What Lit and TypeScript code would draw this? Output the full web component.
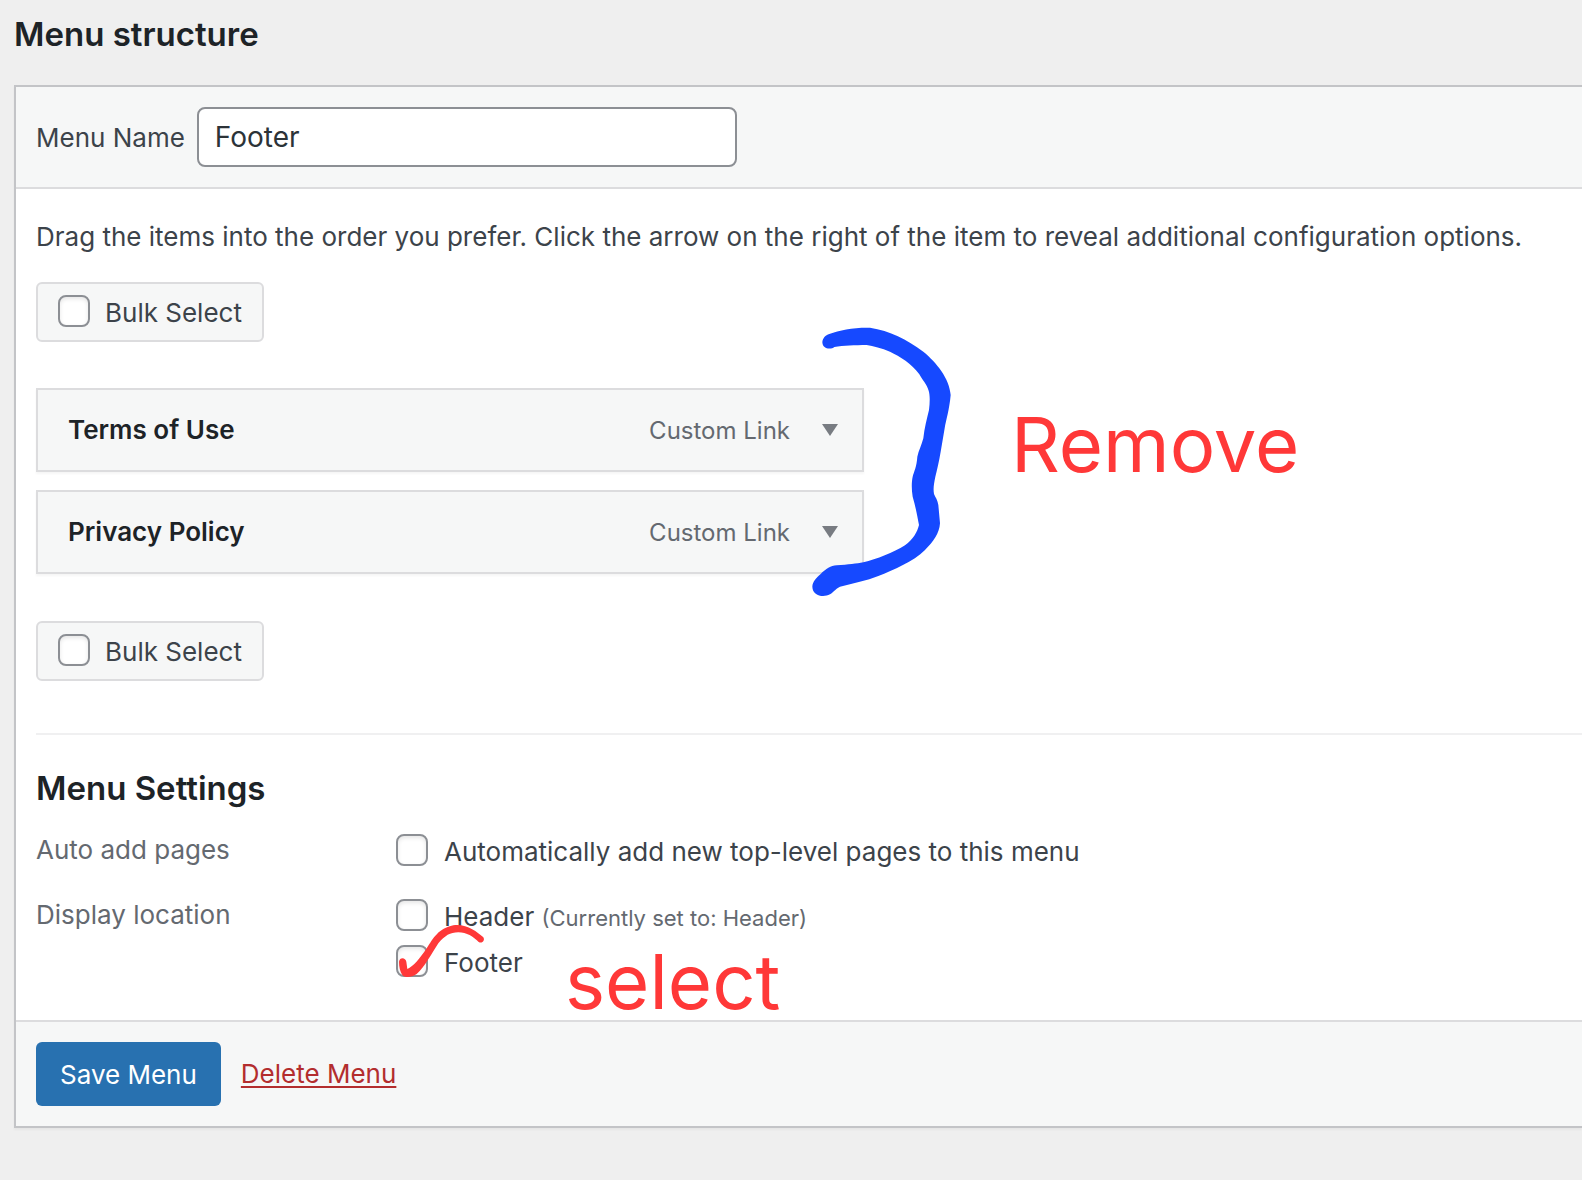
import { LitElement, html, css } from "lit";
import { customElement, property, state } from "lit/decorators.js";

interface MenuItem {
  title: string;
  type: string;
}

@customElement("bulk-select")
class BulkSelect extends LitElement {
  static styles = css`
    :host {
      display: block;
    }
    .bulk {
      display: inline-flex;
      align-items: center;
      gap: 15px;
      box-sizing: border-box;
      height: 60px;
      padding: 2px 20px 0;
      border: 2px solid #dcdcde;
      border-radius: 6px;
      background: #f6f7f7;
      color: #3c434a;
      font-size: 26px;
      line-height: 40px;
    }
    .box {
      appearance: none;
      flex: none;
      box-sizing: border-box;
      width: 32px;
      height: 32px;
      margin: 0 0 4px;
      border: 2px solid #8c8f94;
      border-radius: 8px;
      background: #fff;
      box-shadow: inset 0 2px 4px rgba(0, 0, 0, 0.1);
    }
  `;

  render() {
    return html`<label class="bulk"><input class="box" type="checkbox" />Bulk Select</label>`;
  }
}

@customElement("menu-item")
class MenuItemRow extends LitElement {
  @property() title = "";
  @property() type = "";

  static styles = css`
    :host {
      display: block;
    }
    .item {
      display: flex;
      align-items: center;
      box-sizing: border-box;
      height: 84px;
      padding: 0 12px 0 30px;
      border: 2px solid #dcdcde;
      background: #f6f7f7;
      box-shadow: 0 2px 2px rgba(0, 0, 0, 0.04);
      line-height: 40px;
    }
    .title {
      flex: 1;
      color: #1d2327;
      font-size: 26px;
      font-weight: 600;
    }
    .type {
      padding-top: 2px;
      color: #646970;
      font-size: 24px;
    }
    .toggle {
      display: flex;
      align-items: center;
      justify-content: center;
      width: 40px;
      height: 40px;
      margin-left: 20px;
      padding: 0;
      border: 0;
      background: none;
    }
    .arrow {
      display: block;
      width: 16px;
      height: 12px;
      fill: #787c82;
    }
  `;

  render() {
    return html`
      <div class="item">
        <span class="title">${this.title}</span>
        <span class="type">${this.type}</span>
        <button class="toggle" type="button" aria-label="Edit menu item">
          <svg class="arrow" viewBox="0 0 16 12"><path d="M0 0H16L8 12Z" /></svg>
        </button>
      </div>
    `;
  }
}

@customElement("app-root")
class AppRoot extends LitElement {
  @state() private items: MenuItem[] = [
    { title: "Terms of Use", type: "Custom Link" },
    { title: "Privacy Policy", type: "Custom Link" },
  ];

  static styles = css`
    :host {
      display: block;
      box-sizing: border-box;
      min-height: 100vh;
      padding: 14px 0 52px 14px;
      overflow: hidden;
      background: #efefef;
      color: #3c434a;
      font-family: Inter, "Liberation Sans", sans-serif;
      font-size: 26px;
      line-height: 40px;
    }
    .heading {
      margin: 0;
      color: #1d2327;
      font-size: 33px;
      font-weight: 600;
      line-height: 40px;
    }
    .panel {
      margin-top: 31px;
      border: 2px solid #c3c4c7;
      border-right: 0;
      background: #fff;
      box-shadow: 0 2px 2px rgba(0, 0, 0, 0.04);
    }
    .bar {
      display: flex;
      align-items: center;
      padding: 20px;
      background: #f6f7f7;
    }
    .top {
      gap: 12px;
      border-bottom: 2px solid #dcdcde;
    }
    .name-label {
      padding-top: 2px;
    }
    .name {
      box-sizing: border-box;
      width: 540px;
      height: 60px;
      padding: 0 16px;
      border: 2px solid #8c8f94;
      border-radius: 8px;
      background: #fff;
      color: #2c3338;
      font-family: inherit;
      font-size: 28px;
    }
    .content {
      padding: 28px 0 34px 20px;
    }
    .intro {
      margin: 0 0 25px;
      white-space: nowrap;
    }
    .items {
      position: relative;
      display: flex;
      flex-direction: column;
      gap: 18px;
      max-width: 828px;
      margin: 46px 0 47px;
    }
    .settings {
      position: relative;
      margin-top: 52px;
      padding-top: 33px;
      border-top: 2px solid #f0f0f1;
    }
    .group {
      display: grid;
      grid-template-columns: 360px 1fr;
      margin: 0;
      padding: 0;
      border: 0;
    }
    .fields {
      display: grid;
      gap: 17px;
      margin-top: 19px;
    }
    .legend {
      padding-top: 3px;
      color: #646970;
    }
    .options {
      display: grid;
      gap: 0;
      padding-top: 2px;
    }
    .option {
      display: flex;
      align-items: center;
      gap: 16px;
      height: 46px;
    }
    .box {
      appearance: none;
      flex: none;
      box-sizing: border-box;
      width: 32px;
      height: 32px;
      margin: 0 0 4px;
      border: 2px solid #8c8f94;
      border-radius: 8px;
      background: #fff;
      box-shadow: inset 0 2px 4px rgba(0, 0, 0, 0.1);
    }
    .note {
      color: #646970;
      font-size: 22px;
    }
    .bottom {
      gap: 20px;
      border-top: 2px solid #dcdcde;
    }
    .save {
      height: 64px;
      padding: 0 24px;
      border: 0;
      border-radius: 6px;
      background: #2871b0;
      color: #fff;
      font-family: inherit;
      font-size: 26px;
    }
    .delete {
      color: #b32d2e;
      text-decoration: underline;
      text-decoration-thickness: 2px;
      text-underline-offset: 3px;
    }
    .mark {
      position: absolute;
      color: #ff3838;
      font-size: 76px;
      line-height: 90px;
      pointer-events: none;
    }
    .bracket {
      left: 754px;
      top: -78px;
      width: 190px;
      height: 300px;
      fill: #1649ff;
    }
    .remove {
      left: 975px;
      top: 11px;
    }
    .tick {
      left: 334px;
      top: 85px;
      width: 450px;
      height: 210px;
      fill: #ff3838;
    }
    .select {
      left: 529px;
      top: 201px;
    }
  `;

  render() {
    return html`
      <h2 class="heading">Menu structure</h2>
      <form class="panel" @submit=${(e: Event) => e.preventDefault()}>
        <div class="bar top">
          <label class="name-label" for="menu-name">Menu Name</label>
          <input class="name" id="menu-name" type="text" value="Footer" />
        </div>
        <div class="content">
          <p class="intro">
            Drag the items into the order you prefer. Click the arrow on the right of the item to
            reveal additional configuration options.
          </p>
          <bulk-select></bulk-select>
          <div class="items">
            ${this.items.map(
              (i) => html`<menu-item .title=${i.title} .type=${i.type}></menu-item>`
            )}
            <svg class="mark bracket" viewBox="0 0 570 900" aria-hidden="true">
              <path
                d="M97 97C98 84 106 76 118 72C150 60 190 52 240 53C300 62 350 88 400 125C440 158 478 205 482 255C478 300 468 330 464 355L452 425C447 455 441 480 436 500C432 520 429 535 432 552C436 562 443 570 445 585L450 640C448 670 430 695 405 720C370 755 310 780 265 798C230 812 190 820 150 830C135 838 128 848 120 853C100 864 68 858 67 830C68 815 78 804 92 792C108 777 122 767 140 766C175 764 200 761 220 757C260 748 310 728 345 706C370 688 382 665 387 645C382 620 377 590 368 560C364 535 365 515 368 500C372 485 380 470 382 440C386 422 395 405 400 385C403 355 411 325 417 300C420 275 420 255 416 242C410 222 397 210 388 193C365 160 330 140 300 125C275 115 250 108 230 105C195 106 160 106 133 111C125 118 98 120 97 97Z"
              />
            </svg>
            <span class="mark remove">Remove</span>
          </div>
          <bulk-select></bulk-select>
          <section class="settings">
            <h2 class="heading">Menu Settings</h2>
            <div class="fields">
              <div class="group" role="group" aria-labelledby="auto-add">
                <span class="legend" id="auto-add">Auto add pages</span>
                <div class="options">
                  <label class="option">
                    <input class="box" type="checkbox" />
                    <span>Automatically add new top-level pages to this menu</span>
                  </label>
                </div>
              </div>
              <div class="group" role="group" aria-labelledby="location">
                <span class="legend" id="location">Display location</span>
                <div class="options">
                  <label class="option">
                    <input class="box" type="checkbox" />
                    <span>Header <span class="note">(Currently set to: Header)</span></span>
                  </label>
                  <label class="option">
                    <input class="box" type="checkbox" />
                    <span>Footer</span>
                  </label>
                </div>
              </div>
            </div>
            <svg class="mark tick" viewBox="0 0 1350 630" aria-hidden="true">
              <path
                d="M87 425C89 410 107 412 109 425L112 447C130 440 150 415 170 385C190 355 205 325 250 316C290 311 320 335 340 352C346 362 336 372 326 366C310 350 290 337 265 337C240 337 225 347 205 370C185 400 165 440 140 462C125 473 105 474 97 465C90 455 87 440 87 425Z"
              />
            </svg>
            <span class="mark select">select</span>
          </section>
        </div>
        <div class="bar bottom">
          <button class="save" type="submit">Save Menu</button>
          <a class="delete" href="#delete">Delete Menu</a>
        </div>
      </form>
    `;
  }
}
